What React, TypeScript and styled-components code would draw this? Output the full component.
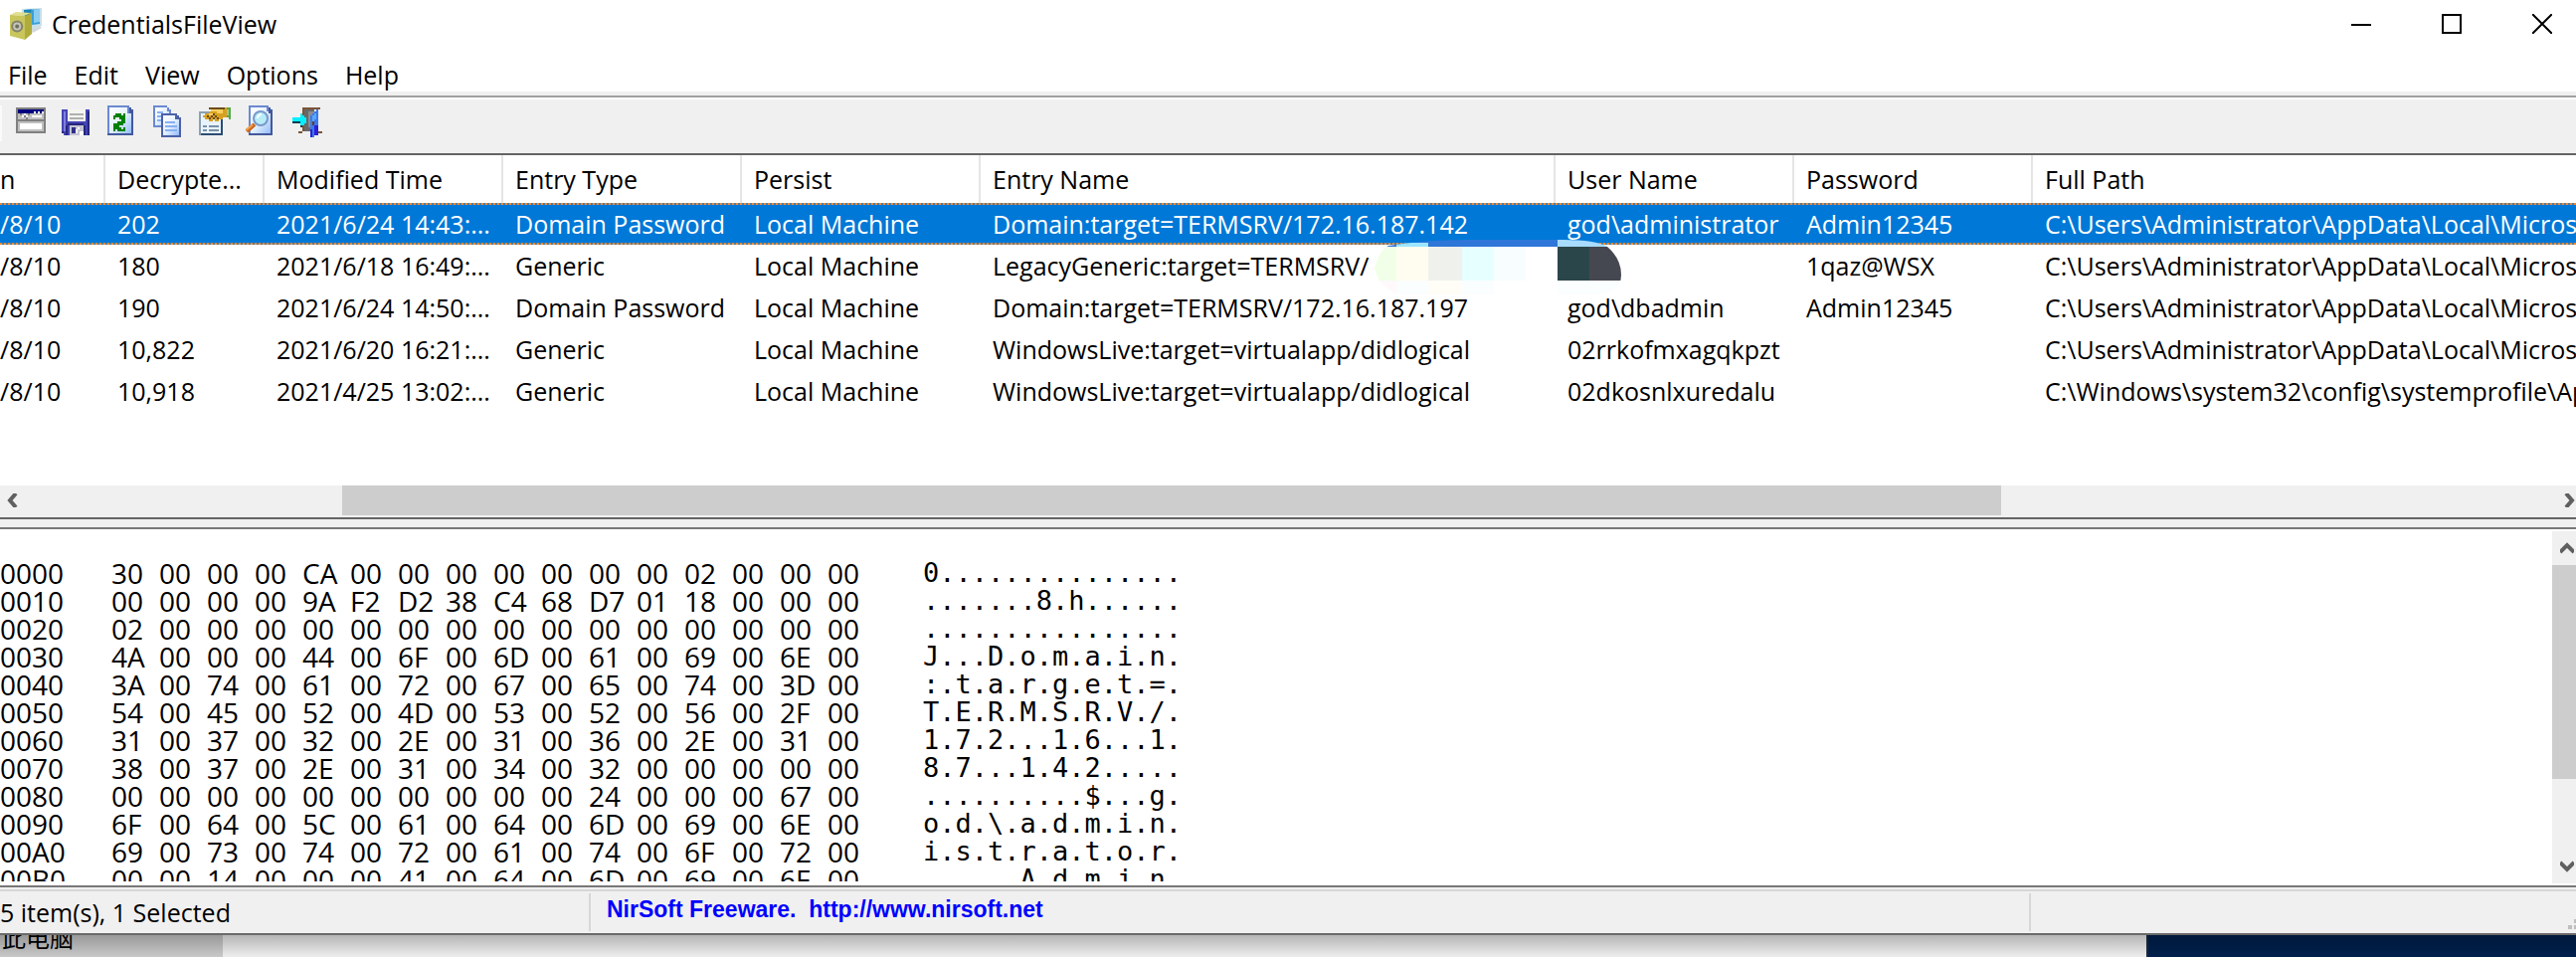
import React from "react";
import styled, { createGlobalStyle, css } from "styled-components";

const ui = `"Open Sans", "Noto Sans", "Noto Sans CJK SC", sans-serif`;
const face = "#f0f0f0";

const GlobalStyle = createGlobalStyle`
  * { box-sizing: border-box; }
  html, body { margin: 0; padding: 0; overflow: hidden; background: #fff; }
  body { font-family: ${ui}; font-size: 25px; color: #000; }
  button { font: inherit; color: inherit; background: none; border: 0; padding: 0; margin: 0; }
`;

const Desktop = styled.div`
  display: flex;
  flex-direction: column;
  height: 100vh;
  overflow: hidden;
`;

const AppWindow = styled.main`
  flex: 1 1 0;
  min-height: 0;
  display: flex;
  flex-direction: column;
  background: #fff;
  border-bottom: 2px solid #6a6a6a;
`;

const TitleBar = styled.header`
  display: flex;
  align-items: center;
  height: 48px;
  padding: 0 24px 0 10px;
`;

const Title = styled.h1`
  flex: 1;
  margin: 0 0 0 10px;
  font-size: 25px;
  font-weight: 400;
  line-height: 34px;
`;

const Captions = styled.div`
  display: flex;
  gap: 71px;
`;

const CaptionButton = styled.button`
  display: flex;
  width: 20px;
  height: 20px;
`;

const MenuBar = styled.nav`
  display: flex;
  gap: 27px;
  height: 44px;
  padding: 10px 8px 0;
  line-height: 34px;
`;

const Toolbar = styled.div`
  display: flex;
  align-items: flex-start;
  gap: 14px;
  height: 64px;
  padding: 14px 14px 0 0;
  background: ${face};
  border-bottom: 2px solid #646464;
  box-shadow: inset 0 4px ${face}, inset 0 6px #a0a0a0, inset 0 8px #fff;
`;

const Grip = styled.span`
  width: 2px;
  height: 36px;
  background: #fafafa;
`;

const ToolButton = styled.button`
  display: flex;
  width: 32px;
  height: 32px;
`;

const ListPane = styled.section`
  position: relative;
  flex: none;
  padding-bottom: 74px;
`;

const ListTable = styled.table`
  width: 100%;
  table-layout: fixed;
  border-collapse: separate;
  border-spacing: 0;
  line-height: 34px;
`;

const Col = styled.col<{ $w?: number }>`
  width: ${(p) => (p.$w ? `${p.$w}px` : "auto")};
`;

const cell = css`
  padding: 0 0 0 12px;
  text-align: left;
  font-weight: 400;
  white-space: pre;
  overflow: hidden;
  &:first-child { padding-left: 0; }
`;

const Th = styled.th`
  ${cell}
  height: 48px;
  border-right: 2px solid #e5e5e5;
  &:last-child { border-right: 0; }
`;

const Td = styled.td`
  ${cell}
  height: 42px;
`;

const dots = "repeating-linear-gradient(90deg, #f58a32 0 2px, #4a80a8 2px 4px)";

const Row = styled.tr<{ $selected?: boolean }>`
  ${(p) =>
    p.$selected &&
    css`
      color: #fff;
      background: ${dots} top / 100% 2px no-repeat, ${dots} bottom / 100% 2px no-repeat, #0078d7;
    `}
`;

const Mosaic = styled.svg`
  position: absolute;
  left: 1382px;
  top: 84px;
`;

const HScroll = styled.div`
  display: flex;
  height: 32px;
  padding-bottom: 2px;
  background: ${face};
`;

const VScroll = styled.div`
  display: flex;
  flex-direction: column;
  width: 24px;
  margin: 2px 0;
  background: ${face};
`;

const HArrow = styled.button<{ $end?: boolean }>`
  display: flex;
  width: 24px;
  height: 30px;
  align-items: center;
  justify-content: ${(p) => (p.$end ? "flex-end" : "center")};
`;

const VArrow = styled.button`
  display: flex;
  width: 24px;
  height: 34px;
  padding-right: 2px;
  align-items: center;
  justify-content: flex-end;
`;

const Track = styled.div<{ $share: number }>`
  flex: ${(p) => p.$share} 0 0;
`;

const Thumb = styled(Track)`
  background: #cdcdcd;
`;

const Splitter = styled.div`
  flex: none;
  height: 12px;
  background: ${face};
  border-top: 2px solid #646464;
  border-bottom: 2px solid #787878;
`;

const HexPane = styled.section`
  flex: 1 1 0;
  min-height: 0;
  display: flex;
  border-bottom: 2px solid #787878;
`;

const HexView = styled.div`
  flex: 1;
  margin-bottom: 4px;
  padding-top: 30px;
  overflow: hidden;
`;

const HexTable = styled.table`
  border-collapse: separate;
  border-spacing: 0;
  table-layout: fixed;
  width: 1200px;
  font-size: 28px;
  line-height: 28px;
  td, th { padding: 0; height: 28px; vertical-align: top; text-align: left; font-weight: 400; white-space: pre; }
`;

const Ascii = styled.td`
  font-family: "DejaVu Sans Mono", monospace;
  font-size: 27px;
`;

const StatusBar = styled.footer`
  display: flex;
  height: 46px;
  padding: 4px 0 2px;
  background: ${face};
  box-shadow: inset 0 2px ${face}, inset 0 4px #d7d7d7;
  line-height: 34px;
`;

const StatusPart = styled.div<{ $w?: number }>`
  display: flex;
  align-items: center;
  flex: ${(p) => (p.$w ? `0 0 ${p.$w}px` : "1")};
  margin-top: 2px;
  border-right: ${(p) => (p.$w ? "2px solid #d7d7d7" : "0")};
`;

const Vendor = styled.span`
  padding: 0 0 6px 16px;
  font-family: "Liberation Sans", Arial, sans-serif;
  font-size: 23px;
  font-weight: 700;
  color: #0000ff;
  white-space: pre;
  a { color: inherit; text-decoration: none; }
`;

const SizeGrip = styled.svg`
  margin-left: auto;
  align-self: flex-end;
  margin-bottom: 2px;
`;

const Behind = styled.div`
  position: relative;
  flex: none;
  display: flex;
  height: 22px;
  background: #00204e;
  overflow: hidden;
  &::after {
    content: "";
    position: absolute;
    inset: 0;
    background: linear-gradient(rgba(0, 0, 0, 0.25), rgba(0, 0, 0, 0.02));
  }
`;

const Explorer = styled.div`
  display: flex;
  flex: 0 0 calc(100% - 430px);
  background: #f2f2f2;
  border-right: 2px solid #1c2c3c;
`;

const TreeItem = styled.div`
  display: flex;
  align-items: flex-end;
  width: 224px;
  padding: 0 0 8px 2px;
  background: #cccccc;
  font-family: "Noto Sans CJK SC", sans-serif;
  font-size: 24px;
  line-height: 24px;
`;

const widths = [106, 160, 240, 240, 240, 578, 240, 240, undefined];
const heads = ["n", "Decrypte...", "Modified Time", "Entry Type", "Persist", "Entry Name", "User Name", "Password", "Full Path"];
const user = "C:\\Users\\Administrator\\AppData\\Local\\Microsoft";
const sys = "C:\\Windows\\system32\\config\\systemprofile\\AppData";
const rows = [
  ["/8/10", "202", "2021/6/24 14:43:...", "Domain Password", "Local Machine", "Domain:target=TERMSRV/172.16.187.142", "god\\administrator", "Admin12345", user],
  ["/8/10", "180", "2021/6/18 16:49:...", "Generic", "Local Machine", "LegacyGeneric:target=TERMSRV/", "", "1qaz@WSX", user],
  ["/8/10", "190", "2021/6/24 14:50:...", "Domain Password", "Local Machine", "Domain:target=TERMSRV/172.16.187.197", "god\\dbadmin", "Admin12345", user],
  ["/8/10", "10,822", "2021/6/20 16:21:...", "Generic", "Local Machine", "WindowsLive:target=virtualapp/didlogical", "02rrkofmxagqkpzt", "", user],
  ["/8/10", "10,918", "2021/4/25 13:02:...", "Generic", "Local Machine", "WindowsLive:target=virtualapp/didlogical", "02dkosnlxuredalu", "", sys],
];

const dump = [
  "30 00 00 00 CA 00 00 00 00 00 00 00 02 00 00 00",
  "00 00 00 00 9A F2 D2 38 C4 68 D7 01 18 00 00 00",
  "02 00 00 00 00 00 00 00 00 00 00 00 00 00 00 00",
  "4A 00 00 00 44 00 6F 00 6D 00 61 00 69 00 6E 00",
  "3A 00 74 00 61 00 72 00 67 00 65 00 74 00 3D 00",
  "54 00 45 00 52 00 4D 00 53 00 52 00 56 00 2F 00",
  "31 00 37 00 32 00 2E 00 31 00 36 00 2E 00 31 00",
  "38 00 37 00 2E 00 31 00 34 00 32 00 00 00 00 00",
  "00 00 00 00 00 00 00 00 00 00 24 00 00 00 67 00",
  "6F 00 64 00 5C 00 61 00 64 00 6D 00 69 00 6E 00",
  "69 00 73 00 74 00 72 00 61 00 74 00 6F 00 72 00",
  "00 00 14 00 00 00 41 00 64 00 6D 00 69 00 6E 00",
].map((line) => line.split(" "));

const toAscii = (bytes: string[]) =>
  bytes
    .map((b) => parseInt(b, 16))
    .map((n) => (n > 32 && n < 127 ? String.fromCharCode(n) : "."))
    .join("");

type IconProps = { children: React.ReactNode };
const Icon = ({ children }: IconProps) => (
  <svg width="32" height="32" viewBox="0 0 16 16" shapeRendering="crispEdges" aria-hidden="true">
    {children}
  </svg>
);

const AppIcon = () => (
  <svg width="32" height="32" viewBox="0 0 16 16" aria-hidden="true">
    <path d="M9.5 10.5 14 8.5 16 10l-4.500 2.500z" fill="#d5d8da" />
    <path d="M6 0.500 16 0v9l-3 1.500L6 9z" fill="#c9dfe9" />
    <path d="M7 1 15 0.500V8L7 9z" fill="#3aa0d8" />
    <path d="M7 1 11 0.800 8 7z" fill="#1784b8" />
    <path d="M12 0.700 15 0.500V7l-3 .5z" fill="#8ccdf0" />
    <path d="M0 3.500 3 2l7.500.500L7 4z" fill="#dfdf8e" />
    <path d="M0 3.500 7.500 4v12L0 14z" fill="#c8c65c" />
    <path d="M7.500 4 11 2.500V13l-3.500 3z" fill="#b0ac3c" />
    <circle cx="3.600" cy="9.300" r="3" fill="#83836c" />
    <circle cx="3.600" cy="9.300" r="2" fill="#c4c4b4" />
    <circle cx="3.600" cy="9.300" r="1" fill="#6d6d62" />
  </svg>
);

const PropertiesWindowIcon = () => (
  <Icon>
    <path fill="#808080" d="M0 1h15v13H0z" />
    <path fill="#c0c0c0" d="M1 2h13v11H1z" />
    <path fill="#000080" d="M1 2h13v2H1z" />
    <path fill="#fff" d="M9 3h1v1H9zM11 3h1v1h-1zM13 3h1v1h-1zM8 5h5v1H8zM2 9h11v3H2zM3 5h1v1H3zM5 5h1v1H5zM4 4h1v1H4z" />
    <path fill="#808080" d="M1 7h13v1H1zM2 4h1v1H2zM4 5h1v1H4zM6 4h1v1H6zM5 6h1v1H5z" />
  </Icon>
);

const SaveIcon = () => (
  <Icon>
    <path fill="#4444b4" d="M0 2h14v13H1v-1H0z" />
    <path fill="#26267c" d="M13 3h1v12h-1zM0 13h1v1H0zM2 10h1v5H2zM11 10h1v5h-1zM3 9h8v1H3z" />
    <path fill="#8080dc" d="M1 3h1v10H1z" />
    <path fill="#f4f4f0" d="M3 2h9v6H3z" />
    <path fill="#b0b0b0" d="M4 4h7v1H4zM4 6h7v1H4z" />
    <path fill="#c4c4d4" d="M4 10h7v5H4z" />
    <path fill="#303088" d="M5 11h2v3H5z" />
    <path fill="#fff" d="M8 11h1v1H8zM7 12h1v2H7zM9 13h2v2H9z" />
  </Icon>
);

const PageFill = ({ id }: { id: string }) => (
  <linearGradient id={id} x1="0" y1="0" x2="1" y2="1">
    <stop offset="0" stopColor="#fff" />
    <stop offset="0.5" stopColor="#e4f0ff" />
    <stop offset="1" stopColor="#94bcf8" />
  </linearGradient>
);

const RefreshIcon = () => (
  <Icon>
    <PageFill id="pg1" />
    <path fill="#6a8ad0" d="M0 0h11v1h1v1h1v13H0z" />
    <path fill="url(#pg1)" d="M1 1h9v3h2v10H1z" />
    <path fill="#44589c" d="M11 1h1v1h1v2h-2zM12 4h1v11h-1zM0 14h13v1H0z" />
    <path fill="#008000" d="M4 4h3v1h1v-1h1v5H5V8h2V7H6V6H4v1H3V5h1zM3 9h5v1H6v1h1v1h1v1H5v-1H4v1H3zM8 11h1v2H8z" />
  </Icon>
);

const CopyIcon = () => (
  <Icon>
    <PageFill id="pg2" />
    <path fill="#6a8ad0" d="M0 0h7v1h1v1h1v9H0z" />
    <path fill="url(#pg2)" d="M1 1h6v2h1v7H1z" />
    <path fill="#88b0f0" d="M2 3h3v1H2zM2 5h4v1H2zM2 7h4v1H2z" />
    <path fill="#4c60a8" d="M4 4h8v1h1v1h1v10H4z" />
    <path fill="url(#pg2)" d="M5 5h6v2h2v8H5z" />
    <path fill="#88b0f0" d="M6 8h5v1H6zM6 10h6v1H6zM6 12h6v1H6z" />
  </Icon>
);

const PropertiesIcon = () => (
  <Icon>
    <path fill="#8ca0b4" d="M0 3h12v12H0z" />
    <path fill="#e8f3fb" d="M1 4h10v10H1z" />
    <path fill="#2c4c74" d="M11 7h1v8h-1zM1 14h11v1H1z" />
    <path fill="#7890a8" d="M2 10h2v1H2zM5 10h5v1H5zM2 12h2v1H2zM5 12h5v1H5z" />
    <path fill="#d8a020" d="M6 1h8v5h-2v1h-2v1H8V7H7v1H5V7H3V6H2V5h1V4h2V3h1V2h-1z" />
    <path fill="#f8d060" d="M6 2h6v1H6zM5 4h2v1H5zM9 3h3v1H9z" />
    <path fill="#6c4c18" d="M4 5h1v1H4zM6 5h1v1H6zM5 6h1v1H5zM7 6h1v1H7zM8 5h1v1H8zM9 6h1v1H9zM7 4h1v1H7zM5 1h8v1H5z" />
    <path fill="#58a848" d="M14 1h2v6h-1V6h-1z" />
    <path fill="#98cc88" d="M14 2h1v3h-1z" />
  </Icon>
);

const FindIcon = () => (
  <Icon>
    <PageFill id="pg3" />
    <path fill="#6a8ad0" d="M2 0h10v1h1v1h1v13H2z" />
    <path fill="url(#pg3)" d="M3 1h8v2h2v11H3z" />
    <path fill="#44589c" d="M12 1h1v1h1v2h-2zM13 4h1v11h-1zM2 14h12v1H2z" />
    <g shapeRendering="auto">
      <path d="M5 9.500 1 13" stroke="#c86820" strokeWidth="2" />
      <path d="M4 9.700 0.800 12.300" stroke="#f0a050" strokeWidth="1" />
      <circle cx="8" cy="6.500" r="3.500" fill="#b8ecf8" stroke="#7898c8" />
      <path d="M6.500 6.500a2 2 0 0 1 2-2" stroke="#fff" fill="none" />
    </g>
  </Icon>
);

const ExitIcon = () => (
  <Icon>
    <path fill="#7c5438" d="M6 1h9v1H6zM6 2h1v3H6zM6 10h1v3h-1v1H4v-1h2zM13 13h3v1h-3z" />
    <path fill="#686868" d="M7 2h5v11H7z" />
    <path fill="#8c8c8c" d="M9 3h3v8H9z" />
    <path fill="#3c78f0" d="M14 2v13h-2v1h-2V5h1V4h1V3h1V2z" />
    <path fill="#58a8f8" d="M11 5h1v5h-1zM12 4h1v3h-1z" />
    <path fill="#2c20d8" d="M12 10h2v5h-2zM10 12h1v4h-1z" />
    <path fill="#604020" d="M11 8h1v2h-1z" />
    <path fill="#103c50" d="M1 8h4v1H1zM5 9h1v2H5z" />
    <path fill="#00f0ff" d="M1 6h4V4h1v1h1v1h1v3H7v1H5V8H1z" />
  </Icon>
);

const tools: [string, React.FC][] = [
  ["Advanced Options", PropertiesWindowIcon],
  ["Save", SaveIcon],
  ["Refresh", RefreshIcon],
  ["Copy", CopyIcon],
  ["Properties", PropertiesIcon],
  ["Find", FindIcon],
  ["Exit", ExitIcon],
];

const chevrons = {
  left: [12, 14, "M10 0 4 7l6 7"],
  right: [12, 14, "M2 0l6 7-6 7"],
  up: [14, 12, "M0 10 7 3l7 7"],
  down: [14, 12, "M0 2l7 7 7-7"],
} as const;

const Chevron = ({ dir }: { dir: keyof typeof chevrons }) => {
  const [w, h, d] = chevrons[dir];
  return (
    <svg width={w} height={h} viewBox={`0 0 ${w} ${h}`} aria-hidden="true">
      <path d={d} fill="none" stroke="#606060" strokeWidth="4" />
    </svg>
  );
};

export default function App() {
  return (
    <Desktop>
      <GlobalStyle />
      <AppWindow>
        <TitleBar>
          <AppIcon />
          <Title>CredentialsFileView</Title>
          <Captions>
            <CaptionButton aria-label="Minimize">
              <svg width="20" height="20"><path d="M0 11h20" stroke="#000" strokeWidth="2" /></svg>
            </CaptionButton>
            <CaptionButton aria-label="Maximize">
              <svg width="20" height="20"><path d="M1 1h18v18H1z" fill="none" stroke="#000" strokeWidth="2" /></svg>
            </CaptionButton>
            <CaptionButton aria-label="Close">
              <svg width="20" height="20"><path d="M0 0l20 20M20 0 0 20" stroke="#000" strokeWidth="2" /></svg>
            </CaptionButton>
          </Captions>
        </TitleBar>
        <MenuBar>
          {["File", "Edit", "View", "Options", "Help"].map((m) => (
            <button key={m}>{m}</button>
          ))}
        </MenuBar>
        <Toolbar>
          <Grip />
          {tools.map(([name, Glyph]) => (
            <ToolButton key={name} aria-label={name}>
              <Glyph />
            </ToolButton>
          ))}
        </Toolbar>
        <ListPane>
          <ListTable>
            <colgroup>
              {widths.map((w, i) => (
                <Col key={i} $w={w} />
              ))}
            </colgroup>
            <thead>
              <tr>
                {heads.map((h) => (
                  <Th key={h} scope="col">{h}</Th>
                ))}
              </tr>
            </thead>
            <tbody>
              {rows.map((r, i) => (
                <Row key={i} $selected={i === 0}>
                  {r.map((c, j) => (
                    <Td key={j}>{c}</Td>
                  ))}
                </Row>
              ))}
            </tbody>
          </ListTable>
          <Mosaic width="248" height="56" viewBox="0 0 248 56" aria-hidden="true">
            <clipPath id="smear">
              <path d="M0 30Q4 12 14 7Q50 1 90 1H190Q222 1 234 8Q248 20 248 36Q248 56 220 56H30Q6 54 0 30z" />
            </clipPath>
            <g clipPath="url(#smear)">
              <path fill="#fff" d="M0 8h248v48H0z" />
              <path fill="#2e76d8" d="M0 0h184v8H0z" />
              <path fill="#9ce6ff" d="M22 4h32v4H22z" />
              <path fill="#a8dcff" d="M184 0h64v8h-64z" />
              <path fill="#f1ffe8" d="M0 8h22v34H0z" />
              <path fill="#fffdf0" d="M22 8h32v34H22z" />
              <path fill="#eff2ec" d="M54 8h34v34H54z" />
              <path fill="#e6ffff" d="M88 8h32v34H88z" />
              <path fill="#f8feff" d="M120 8h32v34h-32z" />
              <path fill="#2b464a" d="M184 8h32v34h-32z" />
              <path fill="#454751" d="M216 8h32v34h-32z" />
              <path fill="#fff9fb" d="M0 42h22v14H0z" />
              <path fill="#fffdf6" d="M54 42h34v14H54z" />
              <path fill="#fafefe" d="M22 42h32v14H22zM88 42h32v14H88zM184 42h64v14h-64z" />
            </g>
          </Mosaic>
        </ListPane>
        <HScroll>
          <HArrow aria-label="Scroll left"><Chevron dir="left" /></HArrow>
          <Track $share={320} />
          <Thumb $share={1668} />
          <Track $share={554} />
          <HArrow $end aria-label="Scroll right"><Chevron dir="right" /></HArrow>
        </HScroll>
        <Splitter />
        <HexPane>
          <HexView>
            <HexTable>
              <colgroup>
                <Col $w={112} />
                {dump[0].map((_, i) => (
                  <Col key={i} $w={i === 15 ? 96 : 48} />
                ))}
                <Col />
              </colgroup>
              <tbody>
                {dump.map((bytes, i) => (
                  <tr key={i}>
                    <th scope="row">{(i * 16).toString(16).toUpperCase().padStart(4, "0")}</th>
                    {bytes.map((b, j) => (
                      <td key={j}>{b}</td>
                    ))}
                    <Ascii>{toAscii(bytes)}</Ascii>
                  </tr>
                ))}
              </tbody>
            </HexTable>
          </HexView>
          <VScroll>
            <VArrow aria-label="Scroll up"><Chevron dir="up" /></VArrow>
            <Thumb $share={3} />
            <Track $share={1} />
            <VArrow aria-label="Scroll down"><Chevron dir="down" /></VArrow>
          </VScroll>
        </HexPane>
        <StatusBar>
          <StatusPart $w={594}>5 item(s), 1 Selected</StatusPart>
          <StatusPart $w={1448}>
            <Vendor>
              {"NirSoft Freeware.  "}
              <a href="http://www.nirsoft.net">http://www.nirsoft.net</a>
            </Vendor>
          </StatusPart>
          <StatusPart>
            <SizeGrip width="8" height="10" aria-hidden="true">
              <path fill="#bfbfbf" d="M6 0h2v4H6zM0 6h4v4H0zM6 6h2v4H6z" />
            </SizeGrip>
          </StatusPart>
        </StatusBar>
      </AppWindow>
      <Behind>
        <Explorer>
          <TreeItem>此电脑</TreeItem>
        </Explorer>
      </Behind>
    </Desktop>
  );
}
